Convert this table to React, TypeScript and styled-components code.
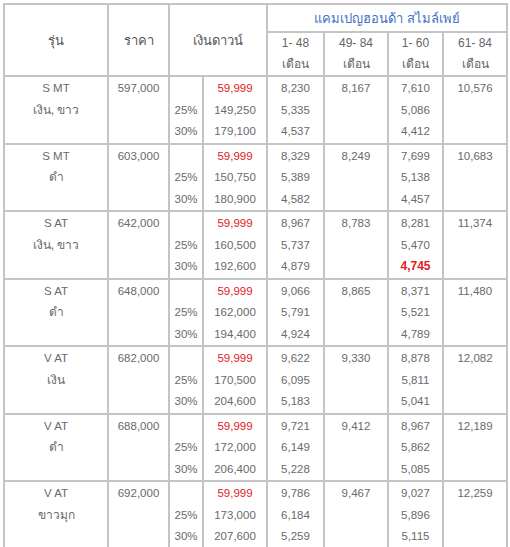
import React from 'react'
import styled, { createGlobalStyle } from 'styled-components'

interface Model {
    name: string
    color: string
    price: string
    down: string[]
    m48: string[]
    m84: string
    m60: string[]
    m61: string
}

const models: Model[] = [
    { name: 'S MT', color: 'เงิน, ขาว', price: '597,000', down: ['149,250', '179,100'], m48: ['8,230', '5,335', '4,537'], m84: '8,167', m60: ['7,610', '5,086', '4,412'], m61: '10,576' },
    { name: 'S MT', color: 'ดำ', price: '603,000', down: ['150,750', '180,900'], m48: ['8,329', '5,389', '4,582'], m84: '8,249', m60: ['7,699', '5,138', '4,457'], m61: '10,683' },
    { name: 'S AT', color: 'เงิน, ขาว', price: '642,000', down: ['160,500', '192,600'], m48: ['8,967', '5,737', '4,879'], m84: '8,783', m60: ['8,281', '5,470', '4,745'], m61: '11,374' },
    { name: 'S AT', color: 'ดำ', price: '648,000', down: ['162,000', '194,400'], m48: ['9,066', '5,791', '4,924'], m84: '8,865', m60: ['8,371', '5,521', '4,789'], m61: '11,480' },
    { name: 'V AT', color: 'เงิน', price: '682,000', down: ['170,500', '204,600'], m48: ['9,622', '6,095', '5,183'], m84: '9,330', m60: ['8,878', '5,811', '5,041'], m61: '12,082' },
    { name: 'V AT', color: 'ดำ', price: '688,000', down: ['172,000', '206,400'], m48: ['9,721', '6,149', '5,228'], m84: '9,412', m60: ['8,967', '5,862', '5,085'], m61: '12,189' },
    { name: 'V AT', color: 'ขาวมุก', price: '692,000', down: ['173,000', '207,600'], m48: ['9,786', '6,184', '5,259'], m84: '9,467', m60: ['9,027', '5,896', '5,115'], m61: '12,259' },
]

const GlobalStyle = createGlobalStyle`
    body {
        margin: 0;
        background: #ffffff;
        font-family: "Liberation Sans", "Noto Sans", Tahoma, sans-serif;
    }
`

const Page = styled.div`
    padding: 3px 2px 0 3px;
`

const Table = styled.table`
    table-layout: fixed;
    width: 505px;
    border-collapse: separate;
    border-spacing: 0;
    border: 1px solid #c4c4c4;
    color: #6a6a6a;
    font-size: 11.5px;
`

const Th = styled.th<{ $blue?: boolean }>`
    border: 1px solid #c4c4c4;
    font-weight: normal;
    font-size: 13px;
    color: ${(p) => (p.$blue ? '#3f72c4' : '#555555')};
    text-align: center;
    vertical-align: middle;
    padding: 0;
    height: 26px;
`

const SubTh = styled.th`
    border: 1px solid #c4c4c4;
    font-weight: normal;
    font-size: 12px;
    color: #666666;
    text-align: center;
    line-height: 21px;
    padding: 0;
`

const Td = styled.td`
    border: 1px solid #c4c4c4;
    text-align: center;
    vertical-align: top;
    padding: 1px 0 0;
    line-height: 21.5px;
    white-space: nowrap;
`

const Line = styled.div<{ $tone?: 'red' | 'strong' }>`
    height: 21.5px;
    color: ${(p) => (p.$tone ? '#e0201c' : 'inherit')};
    font-weight: ${(p) => (p.$tone === 'strong' ? 'bold' : 'normal')};
    font-size: ${(p) => (p.$tone === 'strong' ? '12px' : 'inherit')};
`

const ThaiLine = styled(Line)`
    font-size: 12px;
`

const App = () => {
    return (
        <Page>
            <GlobalStyle />
            <Table>
                <colgroup>
                    <col style={{ width: 104 }} />
                    <col style={{ width: 61 }} />
                    <col style={{ width: 34 }} />
                    <col style={{ width: 64 }} />
                    <col style={{ width: 57 }} />
                    <col style={{ width: 64 }} />
                    <col style={{ width: 55 }} />
                    <col style={{ width: 64 }} />
                </colgroup>
                <thead>
                    <tr>
                        <Th rowSpan={2}>รุ่น</Th>
                        <Th rowSpan={2}>ราคา</Th>
                        <Th rowSpan={2} colSpan={2}>เงินดาวน์</Th>
                        <Th colSpan={4} $blue>แคมเปญฮอนด้า สไมล์เพย์</Th>
                    </tr>
                    <tr>
                        <SubTh>1- 48<br />เดือน</SubTh>
                        <SubTh>49- 84<br />เดือน</SubTh>
                        <SubTh>1- 60<br />เดือน</SubTh>
                        <SubTh>61- 84<br />เดือน</SubTh>
                    </tr>
                </thead>
                <tbody>
                    {models.map((m, i) => (
                        <tr key={i}>
                            <Td>
                                <Line>{m.name}</Line>
                                <ThaiLine>{m.color}</ThaiLine>
                            </Td>
                            <Td><Line>{m.price}</Line></Td>
                            <Td>
                                <Line />
                                <Line>25%</Line>
                                <Line>30%</Line>
                            </Td>
                            <Td>
                                <Line $tone="red">59,999</Line>
                                {m.down.map((d) => <Line key={d}>{d}</Line>)}
                            </Td>
                            <Td>{m.m48.map((v) => <Line key={v}>{v}</Line>)}</Td>
                            <Td><Line>{m.m84}</Line></Td>
                            <Td>
                                {m.m60.map((v) => (
                                    <Line key={v} $tone={v === '4,745' ? 'strong' : undefined}>{v}</Line>
                                ))}
                            </Td>
                            <Td><Line>{m.m61}</Line></Td>
                        </tr>
                    ))}
                </tbody>
            </Table>
        </Page>
    )
}

export default App
